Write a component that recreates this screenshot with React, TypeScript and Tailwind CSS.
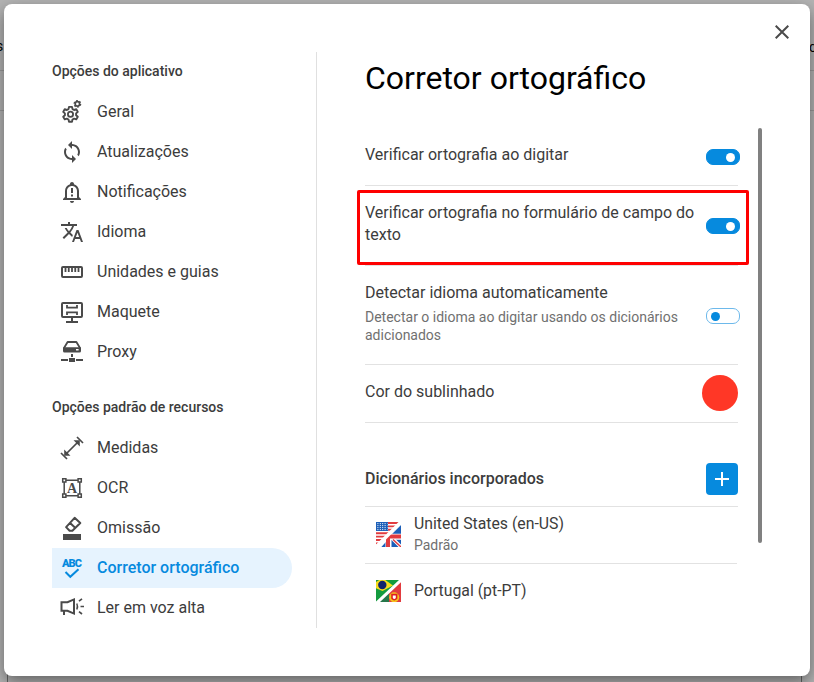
import type { ReactNode } from 'react'
import { MdSync, MdTranslate } from 'react-icons/md'

function Icon({ children }: { children: ReactNode }) {
    return (
        <svg viewBox="0 0 24 24" className="h-6 w-6 shrink-0" fill="none" stroke="currentColor" strokeWidth="2">
            {children}
        </svg>
    )
}

const gear = 'M9 6.9 h3 l.5 2.2 1.6 .9 2.2 -.8 1.5 2.7 -1.7 1.5 v1.8 l1.7 1.5 -1.5 2.7 -2.2 -.8 -1.6 .9 -.5 2.2 h-3 l-.5 -2.2 -1.6 -.9 -2.2 .8 -1.5 -2.7 1.7 -1.5 v-1.8 l-1.7 -1.5 1.5 -2.7 2.2 .8 1.6 -.9z'

const GearsIcon = () => (
    <Icon>
        <path d={gear} strokeWidth="1.9" strokeLinejoin="round" />
        <circle cx="10.5" cy="14.3" r="2.6" strokeWidth="1.8" />
        <circle cx="17.4" cy="3.9" r="2.2" strokeWidth="1.7" />
        <circle cx="17.4" cy="3.9" r="3.3" strokeWidth="1.2" strokeDasharray="1.8 1.65" />
    </Icon>
)

const BellIcon = () => (
    <Icon>
        <path stroke="none" fill="currentColor" d="M10 21H14C14 22.1 13.1 23 12 23S10 22.1 10 21M21 19V20H3V19L5 17V11C5 7.9 7.03 5.17 10 4.29V4C10 2.9 10.9 2 12 2S14 2.9 14 4V4.29C16.97 5.17 19 7.9 19 11V17L21 19M17 11C17 8.24 14.76 6 12 6S7 8.24 7 11V18H17V11Z" />
        <path d="M12 8v5M12 14.6v2" />
    </Icon>
)

const RulerIcon = () => (
    <Icon>
        <rect x="2" y="7" width="20" height="10" rx="1" />
        <path strokeWidth="1.8" d="M5.5 7v5M8.75 7v5M12 7v5M15.25 7v5M18.5 7v5" />
    </Icon>
)

const LayoutIcon = () => (
    <Icon>
        <rect x="2" y="3" width="20" height="14" rx="1" />
        <path d="M12 17v4M6 22h12" />
        <path strokeWidth="1.8" d="M7 5v3.6M17 5v3.6M7 11.4V15M17 11.4V15M7 7.7h10M7 12.3h10" />
    </Icon>
)

const ProxyIcon = () => (
    <Icon>
        <path strokeWidth="1.8" strokeLinejoin="round" d="M4 8 7.6 2h8.8L20 8" />
        <path stroke="none" fill="currentColor" d="M3 7.3h18V11a1.5 1.5 0 0 1-1.5 1.5h-15A1.5 1.5 0 0 1 3 11zM16 9v1.4h2.6V9z" fillRule="evenodd" />
        <path d="M12 14v3M1 20h7M16 20h7" />
        <path stroke="none" fill="currentColor" d="M9 18h6v4H9z" />
    </Icon>
)

const MeasureIcon = () => (
    <Icon>
        <path strokeWidth="1.7" d="M17 1l6 6M1 17l6 6M6 18 18 6" />
        <path stroke="none" fill="currentColor" d="M19.8 4.2v6.3l-6.3-6.3zM4.2 19.8v-6.3l6.3 6.3z" />
    </Icon>
)

const OcrIcon = () => (
    <Icon>
        <path strokeWidth="1.5" d="M6 4.2h12M6 19.8h12M4.2 6v12M19.8 6v12" />
        <path strokeWidth="1.5" d="M2.7 2.7h3.2v3.2H2.7zM18.1 2.7h3.2v3.2h-3.2zM2.7 18.1h3.2v3.2H2.7zM18.1 18.1h3.2v3.2h-3.2z" />
        <text x="12" y="16.7" textAnchor="middle" stroke="none" fill="currentColor" className="font-['Liberation_Serif'] text-[14px] font-bold">A</text>
    </Icon>
)

const EraserIcon = () => (
    <Icon>
        <path strokeWidth="2" strokeLinejoin="round" d="M14.6 1.8 20.3 7 12.4 14.8H9.6L6.1 11.1zM9.9 6.7l5.2 5" />
        <path stroke="none" fill="currentColor" d="M3 18h18v6H3z" />
    </Icon>
)

const SpellIcon = () => (
    <Icon>
        <text x="2" y="11" stroke="none" fill="currentColor" textLength="20" className="text-[11px] font-black">ABC</text>
        <path d="M5.5 16l4.8 4.8 8.2-7.6" />
    </Icon>
)

const MegaphoneIcon = () => (
    <Icon>
        <path d="M1.5 6.2h6L14 3.4v14.2l-6.5-2.8H1.5zM4 15v4" strokeWidth="2" />
        <path d="M16.8 7.5q1.4 3 0 6" strokeWidth="1.5" />
        <path d="M19 5.2l3-2.4M20.5 10.5H24M19 15.6l3 2.4" strokeWidth="1.7" />
    </Icon>
)

const groups = [
    {
        title: 'Opções do aplicativo',
        items: [
            { label: 'Geral', icon: <GearsIcon /> },
            { label: 'Atualizações', icon: <MdSync className="h-6 w-6" /> },
            { label: 'Notificações', icon: <BellIcon /> },
            { label: 'Idioma', icon: <MdTranslate className="h-6 w-6" /> },
            { label: 'Unidades e guias', icon: <RulerIcon /> },
            { label: 'Maquete', icon: <LayoutIcon /> },
            { label: 'Proxy', icon: <ProxyIcon /> },
        ],
    },
    {
        title: 'Opções padrão de recursos',
        items: [
            { label: 'Medidas', icon: <MeasureIcon /> },
            { label: 'OCR', icon: <OcrIcon /> },
            { label: 'Omissão', icon: <EraserIcon /> },
            { label: 'Corretor ortográfico', icon: <SpellIcon />, active: true },
            { label: 'Ler em voz alta', icon: <MegaphoneIcon /> },
        ],
    },
]

function Sidebar() {
    return (
        <nav className="flex h-[576px] w-[265px] shrink-0 flex-col gap-[25px] border-r border-[#e0e0e0] pt-[9px]">
            {groups.map((group) => (
                <div key={group.title} className="flex flex-col">
                    <h2 className="mb-[11px] h-5 text-sm leading-5 font-medium">{group.title}</h2>
                    {group.items.map((item) => (
                        <a
                            key={item.label}
                            className={
                                'flex h-10 w-60 items-center gap-[13px] rounded-r-full pl-2 ' +
                                (item.active ? 'bg-[#e6f3fe] font-medium text-[#068ade]' : 'text-[#3c3c3c]')
                            }
                        >
                            <span className={item.active ? '' : 'text-[#4a4a4a]'}>{item.icon}</span>
                            {item.label}
                        </a>
                    ))}
                </div>
            ))}
        </nav>
    )
}

function Toggle({ on = false }: { on?: boolean }) {
    return (
        <span
            className={
                '-mr-0.5 flex h-4 w-[34px] shrink-0 items-center rounded-[7px] border px-1 ' +
                (on ? 'justify-end border-[#068ade] bg-[#068ade]' : 'border-[#6db9eb] bg-white')
            }
        >
            <span className={'h-[9px] w-[9px] rounded-full ' + (on ? 'bg-white' : 'bg-[#068ade]')} />
        </span>
    )
}

const UsFlag = () => (
    <svg viewBox="0 0 25 25" className="mb-0.5 h-[25px] w-[25px]">
        <path fill="#fff" d="M0 0h25v25H0z" />
        <path stroke="#e23b3f" strokeWidth="1.9" d="M12 1h13M12 4.4h10M12 7.8h7M0 11.2h15M0 14.6h11M0 18h7M0 21.4h4" />
        <path fill="#1c5fb8" d="M0 0h12v9H0z" />
        <path stroke="#fff" strokeWidth="1" strokeDasharray="1 1.4" d="M1.4 1.6h10M1.4 3.6h10M1.4 5.6h10M1.4 7.6h10" />
        <path fill="#1c5fb8" d="M25 3v22H3z" />
        <path stroke="#fff" strokeWidth="6" d="M12.5 13v12M11 14.8h14" />
        <path stroke="#fff" strokeWidth="3.5" d="M14 14l11 11M12 15 3 25" />
        <path stroke="#e23b3f" strokeWidth="1.4" d="M17 17.5l8 7.5" />
        <path stroke="#e23b3f" strokeWidth="4" d="M12 12.5V25M12 14.4h13" />
        <path fill="#fff" d="M22.5 0H25v2.5L2.5 25H0v-2.5z" />
    </svg>
)

const PtFlag = () => (
    <svg viewBox="0 0 25 22" className="h-[22px] w-[25px]">
        <path fill="#149b3f" d="M0 0h25v22H0z" />
        <path fill="#f8dc1c" d="M-6 5.5 6.5-2 17 5.5 6.5 11z" />
        <circle cx="6.3" cy="5" r="4.2" fill="#10246b" />
        <path fill="#26764a" d="M25 0v22H3z" />
        <path fill="#e23b3f" d="M13 11 25 0v22H13z" />
        <circle cx="18.2" cy="17.2" r="5" fill="#f5c61c" />
        <path fill="#fff" stroke="#e02020" strokeWidth="1.6" d="M16 14.6h4.6v3.6q-2.3 3-4.6 0z" />
        <path fill="#fff" d="M23 0h2v2.2L4 22H0v-.6z" />
    </svg>
)

function Content() {
    return (
        <main className="ml-12 w-[373px]">
            <h1 className="mt-1.5 h-[62px] text-[32px] leading-10 whitespace-nowrap text-black">Corretor ortográfico</h1>
            <div className="flex h-[66px] justify-between border-b border-[#e2e2e2] pt-6">
                <span className="leading-[22px]">Verificar ortografia ao digitar</span>
                <span className="pt-[5px]"><Toggle on /></span>
            </div>
            <div className="relative flex h-20 justify-between border-b border-[#e2e2e2] pt-4">
                <span className="w-[336px] leading-[22px]">Verificar ortografia no formulário de campo do texto</span>
                <span className="pt-4"><Toggle on /></span>
                <div className="absolute top-1 -left-2 h-[75px] w-[392px] rounded-[2px] border-[3px] border-[#fe0000]" />
            </div>
            <div className="flex h-[99px] justify-between border-b border-[#e2e2e2] pt-4">
                <div className="w-[330px]">
                    <p className="leading-[22px]">Detectar idioma automaticamente</p>
                    <p className="mt-1 text-sm leading-[18px] text-[#707070]">Detectar o idioma ao digitar usando os dicionários adicionados</p>
                </div>
                <span className="pt-[26px]"><Toggle /></span>
            </div>
            <div className="flex h-[58px] items-center justify-between border-b border-[#e2e2e2]">
                <span className="pb-[3px]">Cor do sublinhado</span>
                <span className="mb-px h-9 w-9 rounded-full bg-[#ff3726]" />
            </div>
            <div className="flex h-[84px] items-end justify-between border-b border-[#e2e2e2] pb-[11px]">
                <h3 className="leading-8 font-medium">Dicionários incorporados</h3>
                <button className="flex h-8 w-8 items-center justify-center rounded bg-[#068ade]">
                    <svg viewBox="0 0 14 14" className="h-3.5 w-3.5" stroke="#fff" strokeWidth="2"><path d="M7 0v14M0 7h14" /></svg>
                </button>
            </div>
            <div className="flex h-[57px] w-[372px] items-center gap-[13px] border-b border-[#e2e2e2] pl-[11px]">
                <UsFlag />
                <div className="pb-[3px]">
                    <p className="text-[15.8px] leading-[22px]">United States (en-US)</p>
                    <p className="text-sm leading-5 text-[#707070]">Padrão</p>
                </div>
            </div>
            <div className="flex h-[54px] items-center gap-[13px] pl-[11px]">
                <PtFlag />
                <span className="text-[15.8px]">Portugal (pt-PT)</span>
            </div>
        </main>
    )
}

export default function App() {
    return (
        <div className="relative h-[682px] w-[814px] overflow-hidden bg-[#b3b3b3] p-1 font-[Roboto,sans-serif] text-base text-[#3c3c3c]">
            <div className="absolute inset-x-0 top-[70px] h-px bg-[#999]" />
            <div className="absolute inset-x-0 top-[110px] h-px bg-[#999]" />
            <span className="absolute top-[36px] -left-1 text-sm text-black">s</span>
            <span className="absolute top-[37px] left-[809px] text-sm text-black">c</span>
            <div className="absolute bottom-0 left-[7px] h-3 w-[795px] border-x border-[#666]" />
            <div className="relative flex h-[672px] w-[806px] rounded-lg bg-white pt-12 pl-12 shadow-[0_6px_16px_rgba(0,0,0,0.45)]">
                <Sidebar />
                <Content />
                <div className="mt-[76px] ml-5 h-[415px] w-1 rounded-full bg-[#808080]" />
                <button className="absolute top-[21px] right-[21px] text-[#4a4a4a]">
                    <svg viewBox="0 0 14 14" className="h-3.5 w-3.5" stroke="currentColor" strokeWidth="2"><path d="M.7.7l12.6 12.6M13.3.7.7 13.3" /></svg>
                </button>
            </div>
        </div>
    )
}
